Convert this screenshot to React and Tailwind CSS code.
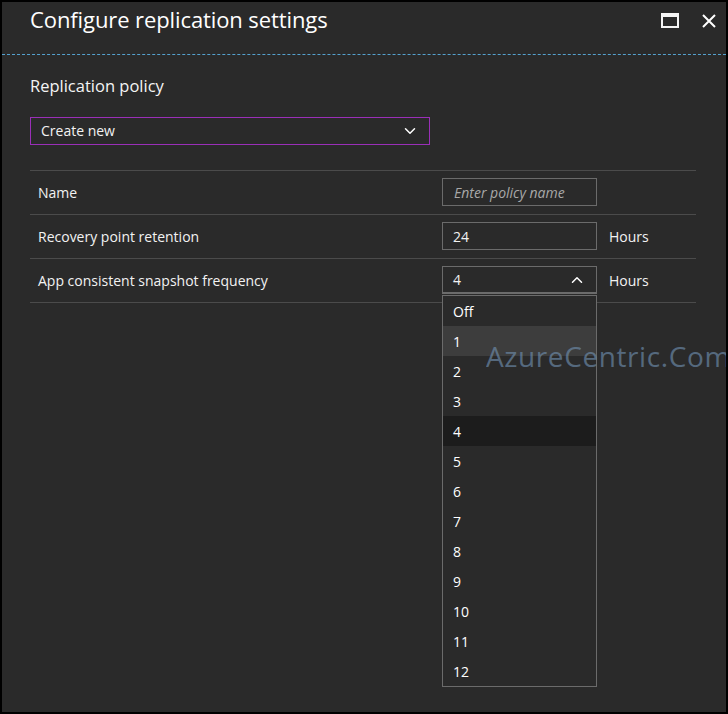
import React from "react";
import { ChevronDown, ChevronUp } from "lucide-react";

const options = ["Off", "1", "2", "3", "4", "5", "6", "7", "8", "9", "10", "11", "12"];

const Row = ({ label, children }) => (
  <div className="flex items-center h-[44px] border-b border-[#4b4b4b] pl-2">
    <span className="w-[404px] text-[14px] text-[#f2f2f2]">{label}</span>
    {children}
  </div>
);

const App = () => {
  return (
    <div
      className="w-[728px] h-[714px] bg-black p-[2px]"
      style={{ fontFamily: '"Open Sans", "Noto Sans", sans-serif' }}
    >
      <div className="relative w-full h-full bg-[#2a2a2a] overflow-hidden">
        {/* header */}
        <div className="flex items-start justify-between h-[52px] pl-7 pr-[10px] pt-[1px]">
          <h1 className="text-[22px] text-white tracking-[-0.1px]">
            Configure replication settings
          </h1>
          <div className="flex items-center gap-[23px] pt-[10px]">
            <div className="w-[18px] h-[15px] border-2 border-t-[4px] border-[#f5f5f5]" />
            <svg width="14" height="14" viewBox="0 0 14 14" className="text-white">
              <path d="M1 1 L13 13 M13 1 L1 13" stroke="currentColor" strokeWidth="2" />
            </svg>
          </div>
        </div>
        <div className="border-t border-dashed border-[#5aaee0] opacity-90" />

        <div className="pl-7 pr-7 pt-[19px]">
          <h2 className="text-[16.5px] text-[#f4f4f4]">Replication policy</h2>

          <div className="mt-[18px] w-[400px] h-[28px] border border-[#9a2fb8] flex items-center justify-between pl-[10px] pr-[10px]">
            <span className="text-[14px] text-[#f2f2f2]">Create new</span>
            <ChevronDown size={18} strokeWidth={2} className="text-white" />
          </div>

          <div className="mt-[25px] w-[666px] border-t border-[#4b4b4b]">
            <Row label="Name">
              <div className="w-[155px] h-[28px] border border-[#6b6b6b] flex items-center pl-[11px]">
                <span className="text-[14px] italic text-[#a8a8a8]">Enter policy name</span>
              </div>
            </Row>
            <Row label="Recovery point retention">
              <div className="w-[155px] h-[28px] border border-[#6b6b6b] flex items-center pl-[10px]">
                <span className="text-[14px] text-[#f2f2f2]">24</span>
              </div>
              <span className="ml-3 text-[14px] text-[#f2f2f2]">Hours</span>
            </Row>
            <Row label="App consistent snapshot frequency">
              <div className="relative w-[155px] h-[28px] border border-[#6b6b6b] border-b-2 flex items-center justify-between pl-[10px] pr-[10px]">
                <span className="text-[14px] text-[#f2f2f2]">4</span>
                <ChevronUp size={18} strokeWidth={2} className="text-white" />
                <ul className="absolute left-[-1px] top-[28px] w-[155px] border border-[#6b6b6b] bg-[#2a2a2a] z-10">
                  {options.map((o) => (
                    <li
                      key={o}
                      className={`h-[30px] flex items-center pl-[10px] text-[14px] text-white ${
                        o === "1" ? "bg-[#3d3d3d]" : o === "4" ? "bg-[#1c1c1c]" : ""
                      }`}
                    >
                      {o}
                    </li>
                  ))}
                </ul>
              </div>
              <span className="ml-3 text-[14px] text-[#f2f2f2]">Hours</span>
            </Row>
          </div>
        </div>

        {/* watermark, cut off at the right edge as in the source */}
        <div className="absolute left-[484px] top-[333px] z-20 text-[28px] text-[#6d8cab] opacity-65 whitespace-nowrap pointer-events-none tracking-[0.6px]">
          AzureCentric.Com
        </div>
      </div>
    </div>
  );
};

export default App;
